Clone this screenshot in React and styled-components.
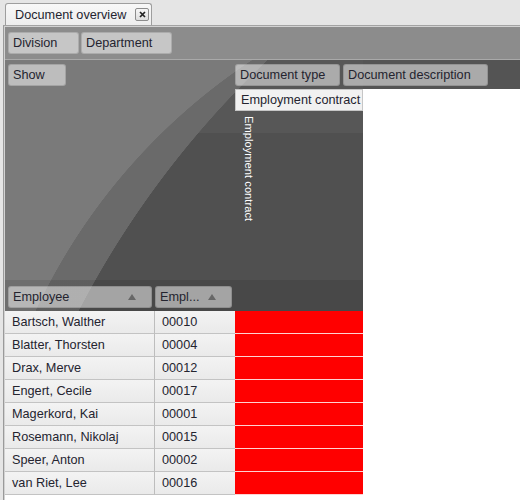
import React from 'react';
import styled, { createGlobalStyle } from 'styled-components';

const GlobalStyle = createGlobalStyle`
  html, body {
    margin: 0;
    padding: 0;
    height: 100%;
  }

  body {
    background: #e5e5e5;
    font-family: "Liberation Sans", Arial, sans-serif;
    font-size: 12.7px;
    color: #24242f;
  }

  #root {
    height: 100%;
  }
`;

const Window = styled.div`
  display: flex;
  flex-direction: column;
  height: 100vh;
  overflow: hidden;
`;

const TabStrip = styled.div`
  display: flex;
  align-items: flex-end;
  flex-shrink: 0;
  height: 25px;
  padding-left: 5px;
`;

const Tab = styled.div`
  display: flex;
  align-items: center;
  gap: 9px;
  height: 22px;
  box-sizing: border-box;
  padding: 0 2px 0 9px;
  border: 1px solid #9e9e9e;
  border-bottom: none;
  border-radius: 3px 3px 0 0;
  background: linear-gradient(#f8f8f8, #ededed);
  white-space: nowrap;
`;

const CloseBox = styled.button`
  display: flex;
  align-items: center;
  justify-content: center;
  width: 14px;
  height: 13px;
  padding: 0;
  border: 1px solid #8c8c8c;
  border-radius: 2px;
  background: linear-gradient(#f6f6f6, #dedede);
  color: #222;
`;

const Panel = styled.div`
  flex: 1;
  margin-left: 3px;
  padding: 1px 0 0 1px;
  background: #fff;
  border-top: 1px solid #a3a3a3;
  border-left: 1px solid #9a9a9a;
  box-shadow: inset 1px 1px 0 #d2d2d2;
`;

const FilterBar = styled.div`
  display: flex;
  gap: 2px;
  height: 33px;
  box-sizing: border-box;
  padding: 5px 0 0 3px;
  background: #8c8c8c;
  border-bottom: 1px solid #a9a9a9;
`;

const FieldButton = styled.div`
  display: flex;
  align-items: center;
  justify-content: space-between;
  flex-shrink: 0;
  width: ${p => p.$w}px;
  height: 22px;
  box-sizing: border-box;
  padding: 0 15px 0 4px;
  border: 1px solid rgba(0, 0, 0, 0.13);
  border-radius: 3px;
  background: rgba(255, 255, 255, 0.5);
  white-space: nowrap;
`;

const SortArrow = styled.span`
  width: 0;
  height: 0;
  border-left: 4px solid transparent;
  border-right: 4px solid transparent;
  border-bottom: 6px solid #676767;
`;

/* dark header block with the curved swoosh on the left and the
   field strip running on to the right edge */
const PivotHead = styled.div`
  display: grid;
  grid-template-columns: 230px 128px 1fr;
  grid-template-rows: 29px 22px 169px 31px;
  background-color: #fff;
  background-image:
    linear-gradient(transparent 220px, rgba(0, 0, 0, 0.1) 220px),
    radial-gradient(circle 610px at 583px 509px, transparent 609.5px, #7a7a7a 610px),
    radial-gradient(circle 947px at 914px 687px, transparent 946.5px, #6a6a6a 947px),
    linear-gradient(#575757 73px, #505050 73px),
    linear-gradient(#545454, #545454);
  background-size: 358px 100%, 358px 100%, 358px 100%, 358px 100%, 100% 29px;
  background-repeat: no-repeat;
`;

const ShowArea = styled.div`
  grid-column: 1;
  grid-row: 1;
  display: flex;
  padding: 4px 0 0 3px;
`;

const ColumnFields = styled.div`
  grid-column: 2 / 4;
  grid-row: 1;
  display: flex;
  gap: 3px;
  padding-top: 4px;
`;

const ColumnHeader = styled.div`
  grid-column: 2;
  grid-row: 2;
  display: flex;
  align-items: center;
  box-sizing: border-box;
  padding-left: 5px;
  background: #f1f1f1;
  border: 1px solid #c6c6c6;
  white-space: nowrap;
  overflow: hidden;
`;

const VerticalCell = styled.div`
  grid-column: 2;
  grid-row: 3;
  padding: 5px 0 0 7px;
`;

const VerticalText = styled.div`
  writing-mode: vertical-rl;
  color: #fff;
  font-size: 11.2px;
  line-height: 13px;
  white-space: nowrap;
`;

const RowFields = styled.div`
  grid-column: 1 / 3;
  grid-row: 4;
  display: flex;
  gap: 3px;
  padding: 6px 0 0 3px;
`;

const DataTable = styled.div`
  display: grid;
  grid-template-columns: 150px 80px 128px;
  grid-auto-rows: 23px;
`;

const Cell = styled.div`
  display: flex;
  align-items: center;
  box-sizing: border-box;
  padding-left: 7px;
  background: linear-gradient(#f3f3f3, #eaeaea);
  border-bottom: 1px solid #c3c3c3;
  border-right: ${p => (p.$divider ? '1px solid #bdbdbd' : 'none')};
  white-space: nowrap;
`;

const ValueCell = styled.div`
  background: #ff0000;
  border-bottom: 1px solid #ffd2d2;
`;

const employees = [
  ['Bartsch, Walther', '00010'],
  ['Blatter, Thorsten', '00004'],
  ['Drax, Merve', '00012'],
  ['Engert, Cecile', '00017'],
  ['Magerkord, Kai', '00001'],
  ['Rosemann, Nikolaj', '00015'],
  ['Speer, Anton', '00002'],
  ['van Riet, Lee', '00016'],
];

const CloseIcon = () => (
  <svg width="7" height="7" viewBox="0 0 7 7">
    <path d="M1 1L6 6M6 1L1 6" stroke="currentColor" strokeWidth="1.7" />
  </svg>
);

export default function App() {
  return (
    <Window>
      <GlobalStyle />
      <TabStrip>
        <Tab>
          Document overview
          <CloseBox aria-label="Close">
            <CloseIcon />
          </CloseBox>
        </Tab>
      </TabStrip>

      <Panel>
        <FilterBar>
          <FieldButton $w={71}>Division</FieldButton>
          <FieldButton $w={91}>Department</FieldButton>
        </FilterBar>

        <PivotHead>
          <ShowArea>
            <FieldButton $w={58}>Show</FieldButton>
          </ShowArea>
          <ColumnFields>
            <FieldButton $w={105}>Document type</FieldButton>
            <FieldButton $w={145}>Document description</FieldButton>
          </ColumnFields>
          <ColumnHeader>Employment contract</ColumnHeader>
          <VerticalCell>
            <VerticalText>Employment contract</VerticalText>
          </VerticalCell>
          <RowFields>
            <FieldButton $w={144}>
              Employee
              <SortArrow />
            </FieldButton>
            <FieldButton $w={77}>
              Empl...
              <SortArrow />
            </FieldButton>
          </RowFields>
        </PivotHead>

        <DataTable>
          {employees.map(([name, id]) => (
            <React.Fragment key={id}>
              <Cell $divider>{name}</Cell>
              <Cell>{id}</Cell>
              <ValueCell />
            </React.Fragment>
          ))}
        </DataTable>
      </Panel>
    </Window>
  );
}
